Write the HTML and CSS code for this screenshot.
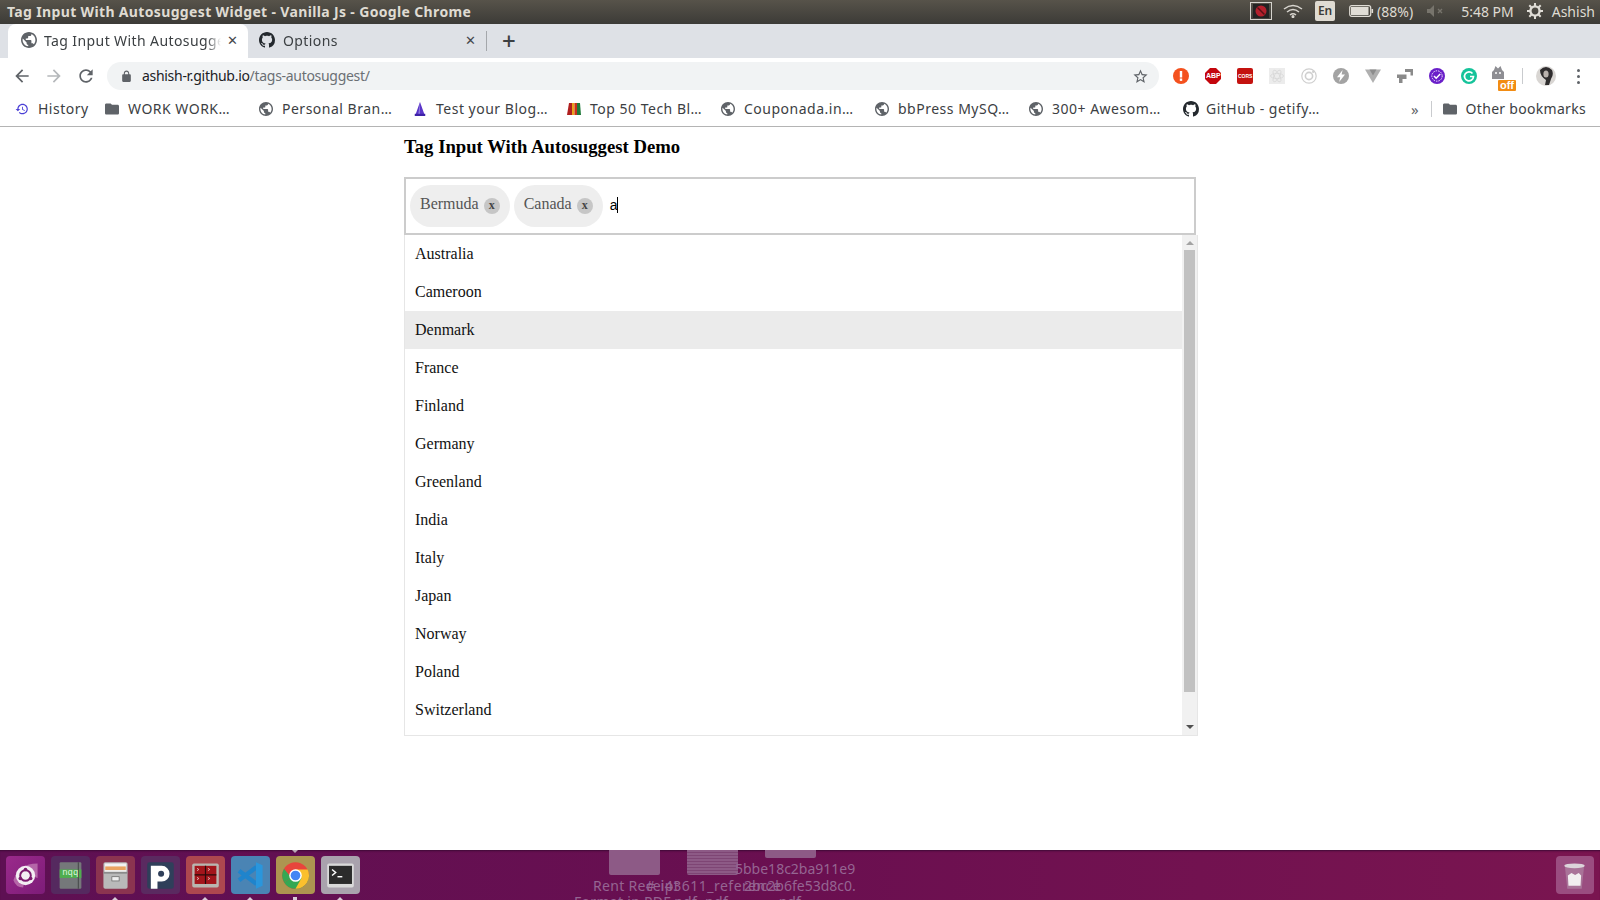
FILE: index.html
```html
<!DOCTYPE html>
<html lang="en">
    <head>
        <meta charset="UTF-8">
        <title>Tag Input With Autosuggest Widget - Vanilla Js</title>
        <link rel="stylesheet" href="styles.css">
    </head>
    <body>
        <svg class="defs" width="0" height="0">
            <symbol id="globe" viewBox="2 2 20 20"><path d="M12 2C6.48 2 2 6.48 2 12s4.48 10 10 10 10-4.48 10-10S17.52 2 12 2zm-1 17.93c-3.95-.49-7-3.85-7-7.93 0-.62.08-1.21.21-1.79L9 15v1c0 1.1.9 2 2 2v1.93zm6.9-2.54c-.26-.81-1-1.39-1.9-1.39h-1v-3c0-.55-.45-1-1-1H8v-2h2c.55 0 1-.45 1-1V7h2c1.1 0 2-.9 2-2v-.41c2.93 1.19 5 4.06 5 7.41 0 2.08-.8 3.97-2.1 5.39z"/></symbol>
            <symbol id="folder" viewBox="2 4 20 16"><path d="M10 4H4c-1.1 0-2 .9-2 2v12c0 1.1.9 2 2 2h16c1.1 0 2-.9 2-2V8c0-1.1-.9-2-2-2h-8l-2-2z"/></symbol>
            <symbol id="github" viewBox="0 0 16 16"><path d="M8 0C3.58 0 0 3.58 0 8c0 3.54 2.29 6.53 5.47 7.59.4.07.55-.17.55-.38 0-.19-.01-.82-.01-1.49-2.01.37-2.53-.49-2.69-.94-.09-.23-.48-.94-.82-1.13-.28-.15-.68-.52-.01-.53.63-.01 1.08.58 1.23.82.72 1.21 1.87.87 2.33.66.07-.52.28-.87.51-1.07-1.78-.2-3.64-.89-3.64-3.95 0-.87.31-1.59.82-2.15-.08-.2-.36-1.02.08-2.12 0 0 .67-.21 2.2.82.64-.18 1.32-.27 2-.27.68 0 1.36.09 2 .27 1.53-1.04 2.2-.82 2.2-.82.44 1.1.16 1.92.08 2.12.51.56.82 1.27.82 2.15 0 3.07-1.87 3.75-3.65 3.95.29.25.54.73.54 1.48 0 1.07-.01 1.93-.01 2.2 0 .21.15.46.55.38A8.013 8.013 0 0016 8c0-4.42-3.58-8-8-8z"/></symbol>
            <symbol id="arrow" viewBox="0 0 24 24"><path d="M20 11H7.83l5.59-5.59L12 4l-8 8 8 8 1.41-1.41L7.83 13H20v-2z"/></symbol>
        </svg>

        <div class="titlebar">
            <span class="wintitle">Tag Input With Autosuggest Widget - Vanilla Js - Google Chrome</span>
            <div class="tray">
                <span class="rec"><svg width="16" height="14" viewBox="0 0 16 14"><rect width="16" height="14" fill="#222"/><circle cx="8" cy="7" r="5.5" fill="#b3202c"/><path d="M4.5 3.5l7 7" stroke="#5a1016" stroke-width="1.5"/></svg></span>
                <svg class="wifi" width="20" height="14" viewBox="0 0 20 14" fill="none" stroke="#d8d5cf" stroke-width="1.5"><path d="M1 5q9-7 18 0"/><path d="M4 8q6-5 12 0"/><path d="M7 11q3-2.4 6 0"/><circle cx="10" cy="12.6" r=".8" fill="#d8d5cf"/></svg>
                <span class="lang">En</span>
                <svg class="batt" width="25" height="14" viewBox="0 0 25 14"><rect x=".7" y="1.7" width="21" height="10.6" rx="2" fill="none" stroke="#e0ddd6" stroke-width="1.2"/><rect x="2" y="3" width="17.5" height="8" fill="#e0ddd6"/><rect x="22.5" y="5" width="1.6" height="4" fill="#e0ddd6"/></svg>
                <span class="pct">(88%)</span>
                <svg class="mute" width="18" height="14" viewBox="0 0 18 14"><path d="M0 5h3l4-4v12l-4-4H0z" fill="#77746c"/><path d="M11 5l4 4m0-4l-4 4" stroke="#77746c" stroke-width="1.4"/></svg>
                <span class="clock">5:48 PM</span>
                <svg class="gear" width="16" height="16" viewBox="0 0 16 16" fill="none" stroke="#e0ddd6"><circle cx="8" cy="8" r="4.6" stroke-width="2.4"/><path d="M8 0v3M8 13v3M0 8h3M13 8h3M2.3 2.3l2.2 2.2M11.5 11.5l2.2 2.2M13.7 2.3l-2.2 2.2M4.5 11.5l-2.2 2.2" stroke-width="2"/></svg>
                <span class="user">Ashish</span>
            </div>
        </div>

        <div class="tabstrip">
            <div class="tab active">
                <svg class="ic16 grey"><use href="#globe"/></svg>
                <span class="tabtext">Tag Input With Autosuggest Widget</span>
                <span class="tabclose">✕</span>
            </div>
            <div class="tab">
                <svg class="ic16 dark"><use href="#github"/></svg>
                <span class="tabtext">Options</span>
                <span class="tabclose">✕</span>
            </div>
            <span class="tabsep"></span>
            <span class="newtab">+</span>
        </div>

        <div class="toolbar">
            <svg class="navbtn back" viewBox="0 0 24 24"><use href="#arrow"/></svg>
            <svg class="navbtn fwd" viewBox="0 0 24 24"><g transform="matrix(-1 0 0 1 24 0)"><use href="#arrow"/></g></svg>
            <svg class="navbtn reload" viewBox="0 0 24 24"><path d="M17.65 6.35C16.2 4.9 14.21 4 12 4c-4.42 0-7.99 3.58-7.99 8s3.57 8 7.99 8c3.73 0 6.84-2.55 7.73-6h-2.08c-.82 2.33-3.04 4-5.65 4-3.31 0-6-2.69-6-6s2.69-6 6-6c1.66 0 3.14.69 4.22 1.78L13 11h7V4l-2.35 2.35z"/></svg>
            <div class="omnibox">
                <svg class="lock" viewBox="0 0 24 24"><path d="M18 8h-1V6c0-2.76-2.24-5-5-5S7 3.24 7 6v2H6c-1.1 0-2 .9-2 2v10c0 1.1.9 2 2 2h12c1.1 0 2-.9 2-2V10c0-1.1-.9-2-2-2zM9 6c0-1.66 1.34-3 3-3s3 1.34 3 3v2H9V6z"/></svg>
                <span class="url"><b>ashish-r.github.io</b>/tags-autosuggest/</span>
                <svg class="star" viewBox="0 0 24 24"><path d="M22 9.24l-7.19-.62L12 2 9.19 8.63 2 9.24l5.46 4.73L5.82 21 12 17.27 18.18 21l-1.63-7.03L22 9.24zM12 15.4l-3.76 2.27 1-4.28-3.32-2.88 4.38-.38L12 6.1l1.71 4.04 4.38.38-3.32 2.88 1 4.28L12 15.4z"/></svg>
            </div>
            <div class="exts">
                <span class="ext"><svg viewBox="0 0 16 16"><circle cx="8" cy="8" r="8" fill="#f4511e"/><rect x="6.8" y="3" width="2.4" height="6.5" fill="#fff"/><rect x="6.8" y="10.5" width="2.4" height="2.4" fill="#fff"/></svg></span>
                <span class="ext"><svg viewBox="0 0 16 16"><path d="M5 0h6l5 5v6l-5 5H5l-5-5V5z" fill="#c4060d"/></svg><em class="abp">ABP</em></span>
                <span class="ext"><svg viewBox="0 0 16 16"><rect width="16" height="16" rx="2" fill="#c4120f"/></svg><em class="cors">CORS</em></span>
                <span class="ext"><svg viewBox="0 0 16 16"><rect width="16" height="16" fill="#ececec"/><g fill="none" stroke="#d8d8d8" stroke-width=".8"><ellipse cx="8" cy="8" rx="6.5" ry="2.6"/><ellipse cx="8" cy="8" rx="6.5" ry="2.6" transform="rotate(60 8 8)"/><ellipse cx="8" cy="8" rx="6.5" ry="2.6" transform="rotate(120 8 8)"/></g></svg></span>
                <span class="ext"><svg viewBox="0 0 16 16" fill="none" stroke="#cfcfcf"><circle cx="8" cy="8" r="7.2" stroke-width="1.2"/><circle cx="8" cy="8" r="3.6" stroke-width="1.6"/><circle cx="12.2" cy="3.8" r="1.2" fill="#cfcfcf" stroke="none"/></svg></span>
                <span class="ext"><svg viewBox="0 0 16 16"><circle cx="8" cy="8" r="8" fill="#a3a3a3"/><path d="M9.6 2L4 9.2h3.2L6.2 14 12 6.6H8.6z" fill="#fff"/></svg></span>
                <span class="ext"><svg viewBox="0 0 16 16"><path d="M0 1.5h16L8 15z" fill="#b0b0b0"/><path d="M4.5 1.5h7L8 7.5z" fill="#8d8d8d"/></svg></span>
                <span class="ext"><svg viewBox="0 0 16 16"><path d="M8 1h8v6.5h-2.5V4H8z" fill="#8a8a8a"/><path d="M0 6.5h9.5V11H5.5v4H2V10H0z" fill="#8a8a8a"/></svg></span>
                <span class="ext"><svg viewBox="0 0 16 16"><circle cx="8" cy="8" r="8" fill="#6a1fc9"/><circle cx="8" cy="8" r="5.2" fill="none" stroke="#fff" stroke-width=".9" stroke-dasharray="1.5 1"/><path d="M5 8l2.2 2.2L11.2 6" fill="none" stroke="#fff" stroke-width="1.5"/></svg></span>
                <span class="ext"><svg viewBox="0 0 16 16"><circle cx="8" cy="8" r="8" fill="#15c39a"/><path d="M11.5 5.5A4.5 4.5 0 1 0 12.5 8.5H9" fill="none" stroke="#fff" stroke-width="1.7"/></svg></span>
                <span class="ext wide"><svg viewBox="0 0 16 16"><path d="M2 7l2-2 1.5-4L8 3.5 10.5 1 12 5l2 2v7H2z" fill="#8e8e93"/><circle cx="6" cy="8" r="1" fill="#fff"/><circle cx="10" cy="8" r="1" fill="#fff"/></svg><em class="off">off</em></span>
                <span class="extsep"></span>
                <span class="avatar"><svg viewBox="0 0 20 20"><circle cx="10" cy="10" r="10" fill="#d9d6d3"/><path d="M4 4q6-6 12 0 2 5-1 9l-2 6H9l1-5Q4 10 4 4z" fill="#2f2d2e"/><ellipse cx="10" cy="8" rx="2.6" ry="3.5" fill="#b9b2ad"/></svg></span>
                <span class="dots"><i></i><i></i><i></i></span>
            </div>
        </div>

        <div class="bookmarks">
            <span class="bm short"><svg class="ic14 violet" viewBox="0 0 24 24"><path d="M13 3c-4.97 0-9 4.03-9 9H1l3.89 3.89.07.14L9 12H6c0-3.87 3.13-7 7-7s7 3.13 7 7-3.13 7-7 7c-1.93 0-3.68-.79-4.94-2.06l-1.42 1.42C8.27 19.99 10.51 21 13 21c4.97 0 9-4.03 9-9s-4.03-9-9-9zm-1 5v5l4.28 2.54.72-1.21-3.5-2.08V8H12z"/></svg>History</span>
            <span class="bm"><svg class="ic14 grey"><use href="#folder"/></svg>WORK WORK…</span>
            <span class="bm"><svg class="ic14 grey"><use href="#globe"/></svg>Personal Bran…</span>
            <span class="bm"><svg class="ic14" viewBox="0 0 14 16"><path d="M7 0l5 14H2z" fill="#5a35c8"/><path d="M7 0v14H5z" fill="#8d78e0"/><rect x="1" y="13.5" width="12" height="2.5" fill="#3e22a8"/></svg>Test your Blog…</span>
            <span class="bm"><svg class="ic14" viewBox="0 0 14 14"><path d="M0 13L2 1h3v12z" fill="#b01f1f"/><path d="M5 13V1h2.5v12z" fill="#e8a21c"/><path d="M7.5 13V1H10v12z" fill="#c9301c"/><path d="M10 13V1h3l1 12z" fill="#1f7a3a"/></svg>Top 50 Tech Bl…</span>
            <span class="bm"><svg class="ic14 grey"><use href="#globe"/></svg>Couponada.in…</span>
            <span class="bm"><svg class="ic14 grey"><use href="#globe"/></svg>bbPress MySQ…</span>
            <span class="bm"><svg class="ic14 grey"><use href="#globe"/></svg>300+ Awesom…</span>
            <span class="bm gh"><svg class="ic16 dark"><use href="#github"/></svg>GitHub - getify…</span>
            <span class="bmright">
                <span class="more">»</span>
                <span class="bmsep"></span>
                <span class="bm last"><svg class="ic14 grey"><use href="#folder"/></svg>Other bookmarks</span>
            </span>
        </div>

        <main class="page">
            <h3 class="heading">Tag Input With Autosuggest Demo</h3>
            <div class="taginput">
                <span class="chip">Bermuda<span class="chipx">x</span></span>
                <span class="chip">Canada<span class="chipx">x</span></span>
                <span class="typed">a</span>
            </div>
            <div class="suggest">
                <ul class="options">
                    <li>Australia</li>
                    <li>Cameroon</li>
                    <li class="hover">Denmark</li>
                    <li>France</li>
                    <li>Finland</li>
                    <li>Germany</li>
                    <li>Greenland</li>
                    <li>India</li>
                    <li>Italy</li>
                    <li>Japan</li>
                    <li>Norway</li>
                    <li>Poland</li>
                    <li>Switzerland</li>
                </ul>
                <div class="scrollbar">
                    <span class="sarrow up"></span>
                    <span class="thumb"></span>
                    <span class="sarrow down"></span>
                </div>
            </div>
        </main>

        <footer class="dock">
            <div class="ghosts">
                <span class="thumbfile t1"></span>
                <span class="thumbfile t2"></span>
                <span class="thumbfile t3"></span>
                <span class="gtext g1">5bbe18c2ba911e9</span>
                <span class="gtext g2">Rent Receipt</span>
                <span class="gtext g3">#-i43611_reference</span>
                <span class="gtext g4">2bc2b6fe53d8c0.</span>
                <span class="gtext g5">Format in PDF.pdf .pdf</span>
                <span class="gtext g6">.pdf</span>
            </div>
            <div class="launcher">
                <span class="tile t-ubuntu"><svg viewBox="0 0 24 24" fill="none"><path d="M2 16Q6 2 22 2v12Q12 10 10 22Q4 22 2 16z" fill="#b566a8"/><circle cx="12" cy="12" r="8" fill="#f3eef3"/><circle cx="12" cy="12" r="4.4" stroke="#7b1a6d" stroke-width="1.6"/><circle cx="12" cy="7" r="1.5" fill="#7b1a6d"/><circle cx="7.7" cy="14.5" r="1.5" fill="#7b1a6d"/><circle cx="16.3" cy="14.5" r="1.5" fill="#7b1a6d"/></svg></span>
                <span class="tile t-nqq"><svg viewBox="0 0 24 24"><rect x="3" y="1" width="18" height="22" rx="1" fill="#75787a"/><rect x="3" y="7" width="18" height="7" fill="#4fae4e"/><rect x="18" y="1" width="1" height="22" fill="#4d4f50"/></svg><em>nqq</em></span>
                <span class="tile t-files"><svg viewBox="0 0 24 24"><rect x="2" y="1" width="20" height="22" rx="1.5" fill="#b9b9b9"/><rect x="3" y="2" width="18" height="7" fill="#f2f2f2"/><rect x="3.5" y="4.5" width="17" height="3" fill="#e9a360"/><rect x="2" y="9" width="20" height="1.5" fill="#8b8b8b"/><rect x="9" y="13" width="6" height="3.5" fill="#eee" stroke="#666" stroke-width=".6"/></svg></span>
                <span class="tile t-p"><svg viewBox="0 0 24 24"><rect x="1" y="1" width="22" height="22" rx="2" fill="#2f3f5a"/><path d="M4 23V4h9a6.5 6.5 0 0 1 0 13H9.5v6z" fill="#fff"/><circle cx="12.5" cy="10.5" r="2.5" fill="#2f3f5a"/></svg></span>
                <span class="tile t-grid"><svg viewBox="0 0 24 24"><rect x="1" y="2" width="22" height="20" rx="1.5" fill="#b9b6b0"/><rect x="3" y="4" width="18" height="15" fill="#a3151b"/><path d="M12 4v15M3 11.5h18" stroke="#2a0b0b"/><path d="M5 6l1.5 1L5 8M14 6l1.500 1L14 8M5 13.5l1.5 1L5 15.5M14 13.5l1.5 1L14 15.5" stroke="#f3dcdc" stroke-width=".6" fill="none"/></svg></span>
                <span class="tile t-code"><svg viewBox="0 0 24 24" fill="none"><path d="M2.5 8L17 19M2.500 16L17 5" stroke="#1f84cc" stroke-width="3.6"/><path d="M16.500 1L22 3.500v17L16.500 23z" fill="#2a96dc"/></svg></span>
                <span class="tile t-chrome"><svg viewBox="0 0 24 24"><circle cx="12" cy="12" r="11" fill="#e8453c"/><path d="M12 12L2.500 17.500A11 11 0 0 1 2.500 6.500L7 12z" fill="#34a853"/><path d="M12 12h11A11 11 0 0 1 12 23 11 11 0 0 1 2.500 17.500z" fill="#34a853"/><path d="M12 7h10A11 11 0 0 1 12 23l5-9z" fill="#fbc02d"/><circle cx="12" cy="12" r="5.200" fill="#fff"/><circle cx="12" cy="12" r="4" fill="#4285f4"/></svg></span>
                <span class="tile t-term"><svg viewBox="0 0 24 24"><rect x="1" y="2" width="22" height="20" rx="1.500" fill="#d9d9d9"/><rect x="2.500" y="4" width="19" height="15" fill="#2b2b2b"/><path d="M5 7l3 2.500L5 12" stroke="#fff" stroke-width="1.200" fill="none"/><path d="M9.500 13h4" stroke="#fff" stroke-width="1.200"/></svg></span>
            </div>
            <span class="mark m1"></span>
            <span class="mark m2"></span>
            <span class="mark m3"></span>
            <span class="mark m4 square"></span>
            <span class="mark m5"></span>
            <span class="mark m6 top"></span>
            <span class="tile t-trash"><svg viewBox="0 0 24 24"><path d="M4 4h16l-2 19H6z" fill="#b89ab0" opacity=".5"/><ellipse cx="12" cy="4" rx="8.500" ry="2" fill="#dcd4da"/><path d="M6.500 12l3-2 3 1.500 3-1.500 2 2-.5 8.500H7z" fill="#f1eeef"/></svg></span>
        </footer>
    </body>
</html>
```

FILE: styles.css
```css
* {
    box-sizing: border-box;
}
html, body {
    margin: 0;
    height: 900px;
    overflow: hidden;
}
body {
    display: flex;
    flex-direction: column;
    background: #fff;
    font-family: "Noto Sans", sans-serif;
}
.defs {
    position: absolute;
}
.ic16 {
    width: 16px;
    height: 16px;
    flex: none;
}
.ic14 {
    width: 14px;
    height: 14px;
    flex: none;
}
.grey {
    fill: #5f6368;
}
.dark {
    fill: #24292e;
}
.violet {
    fill: #4a3fd6;
}

/* ubuntu top bar */
.titlebar {
    height: 24px;
    flex: none;
    display: flex;
    align-items: center;
    padding: 0 0 2px 7px;
    background: linear-gradient(#57534a, #3c3b37);
    color: #dfdbd2;
}
.wintitle {
    font-size: 14px;
    font-weight: 700;
    letter-spacing: 0.35px;
}
.tray {
    margin-left: auto;
    display: flex;
    align-items: center;
    font-size: 14px;
    padding-right: 5px;
}
.tray svg {
    display: block;
}
.rec {
    width: 22px;
    height: 18px;
    border: 1px solid #d5d3cd;
    padding: 1px 2px;
}
.wifi {
    margin-left: 11px;
}
.lang {
    width: 20px;
    height: 20px;
    margin-left: 12px;
    background: #dfdbd2;
    color: #3c3b37;
    border-radius: 2px;
    font-size: 12px;
    font-weight: 600;
    line-height: 20px;
    text-align: center;
}
.batt {
    margin-left: 14px;
}
.pct {
    margin-left: 3px;
}
.mute {
    margin-left: 14px;
}
.clock {
    margin-left: 16px;
}
.gear {
    margin-left: 13px;
}
.user {
    margin-left: 9px;
}

/* chrome tabs */
.tabstrip {
    height: 34px;
    flex: none;
    display: flex;
    align-items: center;
    padding-left: 8px;
    background: #dee1e6;
    font-size: 14px;
    color: #3c4043;
}
.tab {
    width: 240px;
    height: 34px;
    display: flex;
    align-items: center;
    padding: 0 10px 2px 13px;
    border-radius: 8px 8px 0 0;
}
.tab.active {
    background: #fff;
}
.tab + .tab {
    width: 238px;
    padding-left: 11px;
}
.tabtext {
    flex: 1;
    min-width: 0;
    margin-left: 7px;
    overflow: hidden;
    white-space: nowrap;
    letter-spacing: 0.4px;
    -webkit-mask-image: linear-gradient(to left, transparent 0, #000 14px);
    mask-image: linear-gradient(to left, transparent 0, #000 14px);
}
.tab + .tab .tabtext {
    margin-left: 8px;
}
.tabclose {
    width: 12px;
    margin-left: 5px;
    font-size: 13px;
    text-align: center;
    color: #45484c;
}
.tabsep {
    width: 1px;
    height: 20px;
    background: #a4a7ab;
}
.newtab {
    margin-left: 15px;
    font-size: 24px;
    font-weight: 500;
    line-height: 1;
    color: #3c4043;
}

/* chrome toolbar */
.toolbar {
    height: 36px;
    flex: none;
    display: flex;
    align-items: center;
    padding: 0 0 0 12px;
    background: #fff;
}
.navbtn {
    width: 20px;
    height: 20px;
    fill: #5f6368;
    flex: none;
}
.navbtn.fwd {
    margin-left: 12px;
    fill: #b5b8bb;
}
.navbtn.reload {
    margin-left: 12px;
}
.omnibox {
    width: 1052px;
    height: 28px;
    margin-left: 11px;
    display: flex;
    align-items: center;
    padding: 0 10px 0 13px;
    border-radius: 14px;
    background: #f1f3f4;
    font-size: 14px;
}
.lock {
    width: 13px;
    height: 13px;
    fill: #5f6368;
}
.url {
    margin: 0 0 2px 9px;
    color: #6b7074;
    letter-spacing: -0.3px;
}
.url b {
    font-weight: 400;
    color: #202124;
}
.star {
    width: 17px;
    height: 17px;
    margin-left: auto;
    fill: #5f6368;
}
.exts {
    display: flex;
    align-items: center;
    margin-left: 14px;
}
.ext {
    position: relative;
    width: 16px;
    height: 16px;
    margin-right: 16px;
    flex: none;
}
.ext svg {
    display: block;
    width: 16px;
    height: 16px;
}
.ext em {
    position: absolute;
    font-style: normal;
    font-weight: 700;
    color: #fff;
}
.abp {
    top: 3px;
    left: 1px;
    font-size: 7px;
    line-height: 10px;
    font-family: "Liberation Sans", sans-serif;
}
.cors {
    top: 4px;
    left: 1px;
    font-size: 5px;
    line-height: 8px;
    font-family: "Liberation Sans", sans-serif;
}
.off {
    top: 12px;
    left: 5px;
    width: 18px;
    height: 11px;
    background: #f28c13;
    border-radius: 1px;
    font-size: 11px;
    line-height: 10px;
    text-align: center;
    font-family: "Liberation Sans", sans-serif;
}
.ext.wide svg {
    margin: -3px 0 0 -3px;
}
.ext.wide {
    margin-right: 13px;
}
.extsep {
    width: 1px;
    height: 16px;
    background: #c9cbce;
}
.avatar {
    width: 20px;
    height: 20px;
    margin-left: 13px;
}
.avatar svg {
    display: block;
}
.dots {
    display: flex;
    flex-direction: column;
    gap: 3px;
    margin-left: 21px;
}
.dots i {
    width: 3px;
    height: 3px;
    border-radius: 50%;
    background: #5f6368;
}

/* bookmarks bar, chrome gives the cut off ones the same width */
.bookmarks {
    height: 33px;
    flex: none;
    display: flex;
    align-items: center;
    padding: 0 0 3px 15px;
    background: #fff;
    border-bottom: 1px solid #b4b4b4;
    font-size: 14px;
    color: #3c4043;
    white-space: nowrap;
}
.bm {
    width: 154px;
    flex: none;
    display: flex;
    align-items: center;
    gap: 9px;
    letter-spacing: 0.5px;
}
.bm.short {
    width: 90px;
}
.bm.gh {
    gap: 7px;
}
.bmright {
    margin-left: auto;
    display: flex;
    align-items: center;
}
.more {
    font-size: 15px;
    color: #5f6368;
}
.bmsep {
    width: 1px;
    height: 16px;
    margin-left: 12px;
    background: #c9cbce;
}
.bm.last {
    width: auto;
    margin: 0 14px 0 11px;
    letter-spacing: 0.3px;
}

/* page */
.page {
    flex: 1;
    width: 792px;
    margin: 0 auto;
    font-family: "Liberation Serif", serif;
}
.heading {
    margin: 9px 0 20px;
    font-size: 18.72px;
    line-height: 21px;
    color: #000;
}
.taginput {
    width: 792px;
    height: 58px;
    display: flex;
    align-items: center;
    gap: 4px;
    padding: 0 4px;
    border: 2px solid #ccc;
}
.chip {
    height: 42px;
    display: flex;
    align-items: center;
    padding: 0 10px 4px;
    border-radius: 21px;
    background: #eee;
    font-size: 16px;
    color: #555;
}
.chipx {
    width: 16px;
    height: 16px;
    margin: 3px 0 0 5px;
    border-radius: 50%;
    background: #c6c6c6;
    color: #444;
    font-size: 12px;
    font-weight: 700;
    line-height: 14px;
    text-align: center;
}
.typed {
    margin: 0 0 2px 3px;
    border-right: 1px solid #000;
    font-family: "Liberation Sans", sans-serif;
    font-size: 14px;
    line-height: 16px;
    color: #000;
}
.suggest {
    width: 794px;
    height: 501px;
    display: flex;
    border: 1px solid #e6e6e6;
    border-top: 0;
}
.options {
    flex: 1;
    margin: 0;
    padding: 0;
    list-style: none;
    font-size: 16px;
    color: #111;
}
.options li {
    height: 38px;
    padding-left: 10px;
    line-height: 38px;
}
.options li.hover {
    background: #ebebeb;
}
.scrollbar {
    width: 15px;
    display: flex;
    flex-direction: column;
    align-items: center;
    background: #f1f1f1;
}
.thumb {
    width: 11px;
    height: 442px;
    background: #c1c1c1;
}
.sarrow {
    width: 0;
    height: 0;
    border-left: 4px solid transparent;
    border-right: 4px solid transparent;
}
.sarrow.up {
    margin: 6px 0 5px;
    border-bottom: 4px solid #a3a3a3;
}
.sarrow.down {
    margin-top: auto;
    margin-bottom: 6px;
    border-top: 4px solid #505050;
}

/* launcher */
.dock {
    position: relative;
    height: 50px;
    flex: none;
    overflow: hidden;
    background: linear-gradient(to right, #5e1053, #6a0f50 50%, #7a1550);
    box-shadow: inset 0 2px 2px -1px #3d0a35;
}
.launcher {
    position: relative;
    display: flex;
    gap: 6.5px;
    padding: 6px 0 0 6px;
}
.tile {
    width: 38.5px;
    height: 38px;
    flex: none;
    display: flex;
    align-items: center;
    justify-content: center;
    position: relative;
    border-radius: 4px;
}
.tile svg {
    width: 29px;
    height: 29px;
}
.tile em {
    position: absolute;
    top: 12px;
    left: 0;
    width: 100%;
    font-family: "Liberation Mono", monospace;
    font-size: 9px;
    font-style: normal;
    line-height: 10px;
    text-align: center;
    color: #dff5df;
}
.t-ubuntu {
    background: linear-gradient(135deg, #9a2a8b, #7d1c78);
}
.t-nqq {
    background: #55295f;
}
.t-files {
    background: #8b3450;
}
.t-p {
    background: #5a2a60;
}
.t-grid {
    background: #ad474f;
}
.t-code {
    background: #4a84b4;
}
.t-chrome {
    background: #ad9550;
}
.t-term {
    background: #a9a2ad;
}
.t-trash {
    position: absolute;
    top: 6px;
    right: 6px;
    background: #9a4d80;
}
.mark {
    position: absolute;
    bottom: 0;
    width: 0;
    height: 0;
    border-left: 3px solid transparent;
    border-right: 3px solid transparent;
    border-bottom: 3px solid #d8cdd6;
}
.mark.square {
    width: 4px;
    height: 3px;
    border: 0;
    background: #d8cdd6;
}
.mark.top {
    top: 0;
    bottom: auto;
    border-bottom: 0;
    border-top: 3px solid #b9a9b6;
}
.m1 { left: 112px; }
.m2 { left: 202px; }
.m3 { left: 247px; }
.m4 { left: 293px; }
.m5 { left: 337px; }
.m6 { left: 292px; }

/* desktop files showing through the launcher */
.ghosts {
    position: absolute;
    inset: 0;
}
.thumbfile {
    position: absolute;
    top: 0;
    width: 51px;
    background: #8d5a86;
    border-radius: 0 0 2px 2px;
}
.t1 {
    left: 609px;
    height: 25px;
}
.t2 {
    left: 687px;
    height: 25px;
    background: repeating-linear-gradient(#8d5a86 0 2px, #7e4574 2px 3px);
}
.t3 {
    left: 765px;
    height: 8px;
}
.gtext {
    position: absolute;
    font-size: 14px;
    line-height: 17px;
    color: #956592;
    white-space: nowrap;
}
.g1 { left: 735px; top: 10px; }
.g2 { left: 593px; top: 27px; letter-spacing: 0.3px; }
.g3 { left: 646px; top: 27px; letter-spacing: 0.5px; }
.g4 { left: 744px; top: 27px; }
.g5 { left: 574px; top: 43px; letter-spacing: 0.3px; }
.g6 { left: 775px; top: 43px; }
```
